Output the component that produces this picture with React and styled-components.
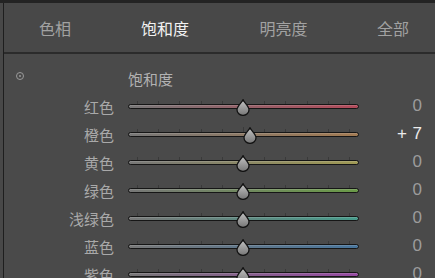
import React from "react";
import styled, { createGlobalStyle } from "styled-components";

const tabs = [
  { label: "色相", width: 102 },
  { label: "饱和度", width: 118, active: true },
  { label: "明亮度", width: 119 },
  { label: "全部", width: 100 },
];

const rows = [
  { name: "红色", color: "#b24a5a", value: 0 },
  { name: "橙色", color: "#a27a52", value: 7 },
  { name: "黄色", color: "#9f9954", value: 0 },
  { name: "绿色", color: "#6a9a48", value: 0 },
  { name: "浅绿色", color: "#479a8a", value: 0 },
  { name: "蓝色", color: "#48759c", value: 0 },
  { name: "紫色", color: "#964aa2", value: 0 },
];

const GlobalStyle = createGlobalStyle`
  body {
    margin: 0;
    background: #4a4a4a;
    overflow: hidden;
  }
`;

const Frame = styled.div`
  width: 435px;
  height: 278px;
  overflow: hidden;
  background: #484848;
  border-top: 3px solid #232323;
  padding-left: 3px;
  box-sizing: border-box;
  font-family: "Noto Sans CJK SC", "Noto Sans", sans-serif;
`;

const Panel = styled.div`
  height: 100%;
  border-left: 1px solid #1e1e1e;
  background: #4a4a4a;
`;

const TabBar = styled.div`
  display: flex;
  height: 49px;
  background: #484848;
  border-bottom: 2px solid #2b2b2b;
`;

const Tab = styled.div`
  flex: 0 0 ${p => p.$width}px;
  display: flex;
  align-items: center;
  justify-content: center;
  position: relative;
  font-size: 16px;
  color: ${p => (p.$active ? "#f2f2f2" : "#a2a2a2")};
  & + &::before {
    content: "";
    position: absolute;
    left: 0;
    top: 17px;
    height: 20px;
    width: 1px;
    background: #2f2f2f;
    box-shadow: 1px 0 0 #555;
  }
`;

const Content = styled.div`
  padding-top: 10px;
`;

const Row = styled.div`
  display: grid;
  grid-template-columns: 110px 231px 49px;
  column-gap: 14px;
  height: 28px;
  align-items: center;
`;

const Label = styled.div`
  text-align: right;
  font-size: 15px;
  color: #a9a9a9;
`;

const Heading = styled.div`
  font-size: 15px;
  color: #b2b2b2;
  padding-top: 1px;
`;

const TargetIcon = styled.span`
  display: block;
  width: 8px;
  height: 8px;
  margin: -4px 0 0 12px;
  border-radius: 50%;
  border: 1px solid #9a9a9a;
  box-sizing: border-box;
  position: relative;
  &::after {
    content: "";
    position: absolute;
    left: 2px;
    top: 2px;
    width: 2px;
    height: 2px;
    border-radius: 50%;
    background: #9a9a9a;
  }
`;

const Slider = styled.div`
  position: relative;
  height: 28px;
`;

const Track = styled.div`
  position: absolute;
  left: 0;
  right: 0;
  top: 12px;
  height: 5px;
  box-sizing: border-box;
  border: 1px solid #161616;
  border-radius: 3px;
  background: linear-gradient(90deg, #777 0%, ${p => p.$color} 100%);
  box-shadow: inset 0 1px 0 rgba(255, 255, 255, 0.15);
`;

const Tick = styled.span`
  position: absolute;
  top: ${p => (p.$major ? 7 : 9)}px;
  width: 1px;
  height: ${p => (p.$major ? 5 : 3)}px;
  background: #3a3a3a;
`;

const Thumb = styled.svg`
  position: absolute;
  top: 7px;
  width: 14px;
  height: 17px;
  margin-left: -7px;
`;

const Value = styled.div`
  text-align: right;
  font-family: "Liberation Sans", Arial, sans-serif;
  font-size: 17px;
  color: ${p => (p.$changed ? "#ececec" : "#9c9c9c")};
  word-spacing: 1px;
`;

const ticks = Array.from({ length: 11 }, (_, i) => i);

const HslSlider = ({ color, value }) => (
  <Slider>
    {ticks.map(i => (
      <Tick key={i} $major={i === 5} style={{ left: 9 + i * 21.2 }} />
    ))}
    <Track $color={color} />
    <Thumb viewBox="0 0 14 17" style={{ left: 115 + value * 1.06 }}>
      <defs>
        <linearGradient id="thumbFill" x1="0" y1="0" x2="0" y2="1">
          <stop offset="0" stopColor="#c4c4c4" />
          <stop offset="1" stopColor="#767676" />
        </linearGradient>
      </defs>
      <path
        d="M7 0.8 C8.2 3.5 13 7 13 10.8 A6 5.6 0 0 1 1 10.8 C1 7 5.8 3.5 7 0.8 Z"
        fill="url(#thumbFill)"
        stroke="#121212"
        strokeWidth="1.3"
      />
    </Thumb>
  </Slider>
);

export default function App() {
  return (
    <Frame>
      <GlobalStyle />
      <Panel>
        <TabBar>
          {tabs.map(t => (
            <Tab key={t.label} $width={t.width} $active={t.active}>
              {t.label}
            </Tab>
          ))}
        </TabBar>
        <Content>
          <Row>
            <div>
              <TargetIcon />
            </div>
            <Heading>饱和度</Heading>
            <div />
          </Row>
          {rows.map(r => (
            <Row key={r.name}>
              <Label>{r.name}</Label>
              <HslSlider color={r.color} value={r.value} />
              <Value $changed={r.value !== 0}>
                {r.value > 0 ? `+ ${r.value}` : r.value}
              </Value>
            </Row>
          ))}
        </Content>
      </Panel>
    </Frame>
  );
}
